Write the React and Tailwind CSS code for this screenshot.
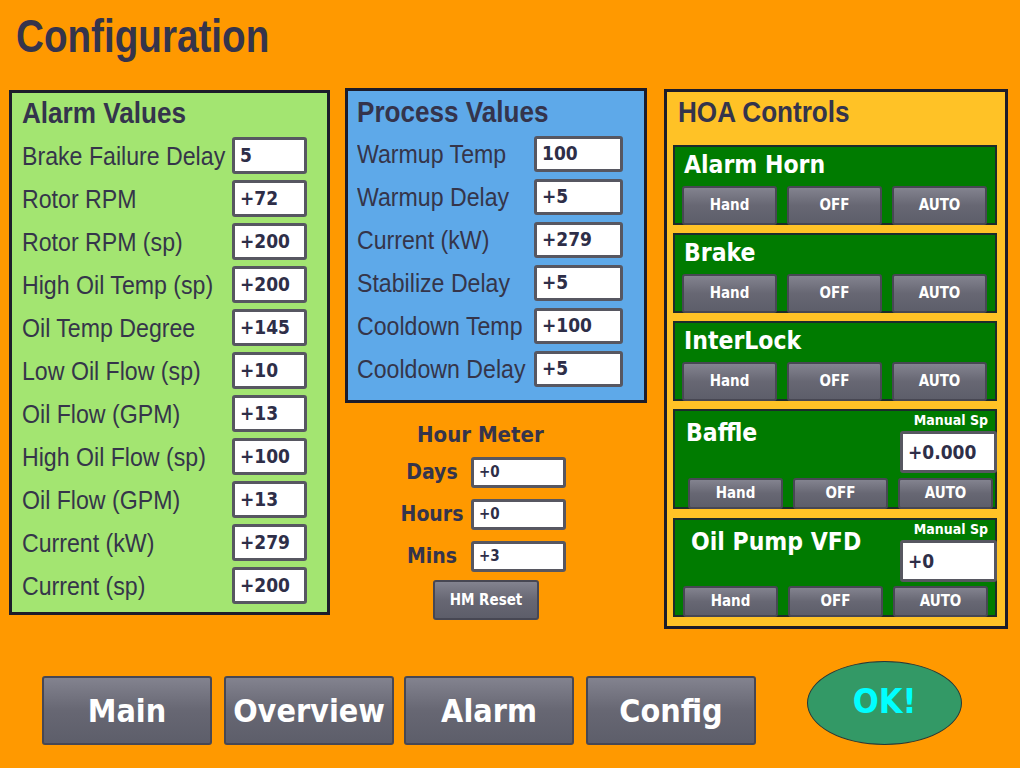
import React from "react";

const LS = "font-['Liberation_Sans',Arial,sans-serif]";
const DC = "font-['DejaVu_Sans_Condensed','DejaVu_Sans',sans-serif]";
const BTN =
  "bg-gradient-to-b from-[#83838f] via-[#676773] to-[#5d5e6a] border-2 border-[#474753] rounded-[3px] text-white font-bold flex items-center justify-center font-['DejaVu_Sans_Condensed','DejaVu_Sans',sans-serif]";

function ValueBox({ value, className }) {
  return (
    <div
      className={`bg-white border-[3px] border-[#575761] rounded-[3px] flex items-center pl-[5px] text-[#2e2e48] font-bold ${DC} ${className}`}
    >
      {value}
    </div>
  );
}

function PanelTitle({ children, pad }) {
  return (
    <div className={`${LS} font-bold text-[29px] leading-[29px] text-[#34344c] whitespace-nowrap ${pad}`}>
      <span className="inline-block origin-left scale-x-[0.9]">{children}</span>
    </div>
  );
}

function Label({ children, width }) {
  return (
    <div className={`${LS} ${width} text-[26px] leading-[26px] text-[#35354a] whitespace-nowrap`}>
      <span className="inline-block origin-left scale-x-[0.89]">{children}</span>
    </div>
  );
}

const alarmRows = [
  ["Brake Failure Delay", "5"],
  ["Rotor RPM", "+72"],
  ["Rotor RPM (sp)", "+200"],
  ["High Oil Temp (sp)", "+200"],
  ["Oil Temp Degree", "+145"],
  ["Low Oil Flow (sp)", "+10"],
  ["Oil Flow (GPM)", "+13"],
  ["High Oil Flow (sp)", "+100"],
  ["Oil Flow (GPM)", "+13"],
  ["Current (kW)", "+279"],
  ["Current (sp)", "+200"],
];

const processRows = [
  ["Warmup Temp", "100"],
  ["Warmup Delay", "+5"],
  ["Current (kW)", "+279"],
  ["Stabilize Delay", "+5"],
  ["Cooldown Temp", "+100"],
  ["Cooldown Delay", "+5"],
];

function HoaButtons({ className, h }) {
  return (
    <div className={`mt-auto -mb-[2px] flex gap-[10px] ${className}`}>
      {["Hand", "OFF", "AUTO"].map((t) => (
        <div key={t} className={`${BTN} w-[95px] ${h} text-[15px]`}>
          {t}
        </div>
      ))}
    </div>
  );
}

function SmallHoa({ title, className }) {
  return (
    <div className={`ml-[6px] w-[324px] h-[80px] border-2 border-[#1b2b2b] bg-[#007b00] flex flex-col ${className}`}>
      <div className={`${DC} font-bold text-white text-[24.5px] leading-[24.5px] pt-[6px] pl-[9px]`}>{title}</div>
      <HoaButtons className="pl-[7px]" h="h-[39px]" />
    </div>
  );
}

function BigHoa({ title, value, className, titlePad, btnPad, h }) {
  return (
    <div className={`ml-[6px] w-[324px] ${h} border-2 border-[#1b2b2b] bg-[#007b00] flex flex-col ${className}`}>
      <div className="flex justify-between">
        <div className={`${DC} font-bold text-white text-[24.5px] leading-[24.5px] pt-[10px] ${titlePad}`}>{title}</div>
        <div className="flex flex-col items-end -mr-[2px]">
          <div className={`${DC} font-bold text-white text-[14px] leading-[16px] pt-[1px] pr-[9px]`}>Manual Sp</div>
          <ValueBox value={value} className="mt-[3px] w-[97px] h-[42px] text-[19px] pl-[5px]" />
        </div>
      </div>
      <HoaButtons className={btnPad} h="h-[31px]" />
    </div>
  );
}

export default function App() {
  return (
    <div className="w-[1020px] h-[768px] bg-[#ff9900] overflow-hidden">
      <div className="pt-[13px] pl-[16px] h-[59px]">
        <div className={`${LS} font-bold text-[46px] leading-[46px] text-[#35344c] whitespace-nowrap`}>
          <span className="inline-block origin-left scale-x-[0.84]">Configuration</span>
        </div>
      </div>

      <div className="mt-[29px] h-[572px] flex items-start pl-[9px]">
        {/* Alarm Values */}
        <div className="mt-[2px] w-[321px] h-[525px] border-[3px] border-[#1c1c2a] bg-[#a3e571] pt-[6px]">
          <PanelTitle pad="pl-[10px]">Alarm Values</PanelTitle>
          <div className="mt-[6px]">
            {alarmRows.map(([l, v], i) => (
              <div key={i} className="flex items-center h-[43px] pl-[10px]">
                <Label width="w-[210px]">{l}</Label>
                <ValueBox value={v} className="w-[75px] h-[37px] text-[19px]" />
              </div>
            ))}
          </div>
        </div>

        {/* Middle column */}
        <div className="ml-[15px] w-[302px] flex flex-col">
          <div className="w-[302px] h-[315px] border-[3px] border-[#1c1c2a] bg-[#5ea9e9] pt-[7px]">
            <PanelTitle pad="pl-[9px]">Process Values</PanelTitle>
            <div className="mt-[5px]">
              {processRows.map(([l, v], i) => (
                <div key={i} className="flex items-center h-[43px] pl-[9px]">
                  <Label width="w-[177px]">{l}</Label>
                  <ValueBox value={v} className="w-[89px] h-[36px] text-[19px]" />
                </div>
              ))}
            </div>
          </div>

          <div className={`${DC} mt-[21px] ml-[72px] font-bold text-[22px] leading-[22px] text-[#34344c]`}>Hour Meter</div>
          <div className="mt-[5px]">
            {[
              ["Days", "+0"],
              ["Hours", "+0"],
              ["Mins", "+3"],
            ].map(([l, v]) => (
              <div key={l} className="flex items-center h-[42px] ml-[55px]">
                <div className={`${DC} w-[64px] text-center font-bold text-[21px] leading-[21px] text-[#34344c]`}>{l}</div>
                <ValueBox value={v} className="ml-[7px] w-[95px] h-[31px] text-[15px] pl-[4px]" />
              </div>
            ))}
          </div>
          <div className={`${BTN} mt-[3px] ml-[88px] w-[106px] h-[40px] text-[15px]`}>HM Reset</div>
        </div>

        {/* HOA Controls */}
        <div className="ml-[17px] mt-[1px] w-[344px] h-[540px] border-[3px] border-[#1c1c2a] bg-[#ffc226] pt-[6px]">
          <PanelTitle pad="pl-[11px]">HOA Controls</PanelTitle>
          <SmallHoa title="Alarm Horn" className="mt-[18px]" />
          <SmallHoa title="Brake" className="mt-[8px]" />
          <SmallHoa title="InterLock" className="mt-[8px] h-[79px]" />
          <BigHoa title="Baffle" value="+0.000" className="mt-[8px]" h="h-[100px]" titlePad="pl-[11px]" btnPad="pl-[13px]" />
          <BigHoa title="Oil Pump VFD" value="+0" className="mt-[9px]" h="h-[99px]" titlePad="pl-[16px]" btnPad="pl-[8px]" />
        </div>
      </div>

      {/* Nav */}
      <div className="flex items-start pl-[42px]">
        <div className={`${BTN} mt-[16px] w-[170px] h-[69px] text-[32px] border-[#6f86a6]`}>Main</div>
        <div className={`${BTN} mt-[16px] ml-[12px] w-[170px] h-[69px] text-[32px]`}>Overview</div>
        <div className={`${BTN} mt-[16px] ml-[10px] w-[170px] h-[69px] text-[32px]`}>Alarm</div>
        <div className={`${BTN} mt-[16px] ml-[12px] w-[170px] h-[69px] text-[32px]`}>Config</div>
        <div className="ml-[51px] mt-[1px] w-[155px] h-[84px] rounded-[50%] bg-[#339966] border border-[#263838] flex items-center justify-center pb-[5px]">
          <span className={`${DC} font-bold text-[34px] leading-[34px] text-[#00ffff]`}>OK!</span>
        </div>
      </div>
    </div>
  );
}
